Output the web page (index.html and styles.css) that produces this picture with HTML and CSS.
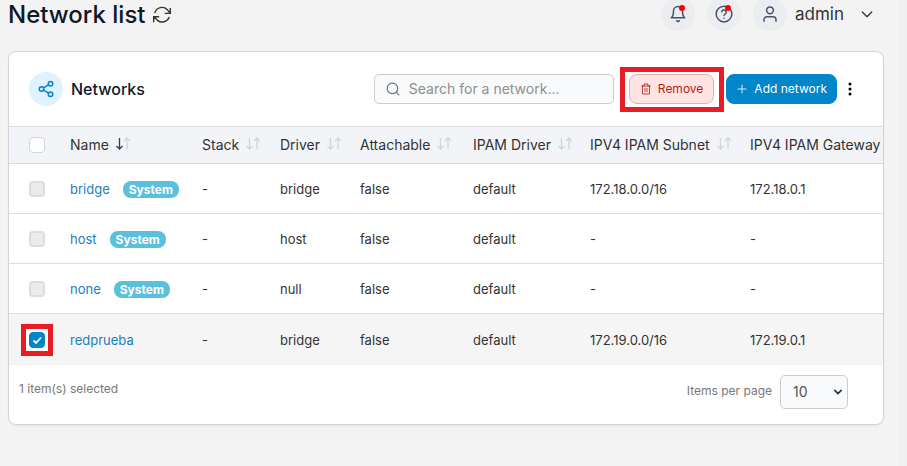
FILE: index.html
```html
<!DOCTYPE html>
<html lang="en">
<head>
<meta charset="utf-8">
<title>Network list</title>
<link rel="stylesheet" href="styles.css">
</head>
<body>
<svg class="sprite" aria-hidden="true">
  <symbol id="sort-down" viewBox="0 0 8 16"><path d="M4.500 2v11M1.500 10l3 3 3-3"/></symbol>
  <symbol id="sort-up" viewBox="0 0 8 16"><path d="M4 13V2M1 5l3-3 3 3"/></symbol>
</svg>
<header class="topbar">
  <h1>Network list</h1>
  <button class="plain refresh" aria-label="Refresh"><svg class="icon" width="20" height="20" viewBox="0 0 24 24"><path d="M22 4v6h-6M2 20v-6h6M3.500 9a9 9 0 0 1 14.900-3.400L22 10M2 14l4.600 4.400A9 9 0 0 0 20.500 15"/></svg></button>
  <nav class="user">
    <button class="round" aria-label="Notifications"><svg class="icon" width="18" height="18" viewBox="0 0 24 24"><path d="M18 8A6 6 0 0 0 6 8c0 7-3 9-3 9h18s-3-2-3-9M10.300 21a2 2 0 0 0 3.400 0"/></svg><i class="dot"></i></button>
    <button class="round" aria-label="Help"><svg class="icon" width="18" height="18" viewBox="0 0 24 24"><circle cx="12" cy="12" r="10.500"/><path d="M9 9a3 3 0 0 1 5.900 1c0 2-3 2.500-3 4M12 17.500v.1"/></svg><i class="dot"></i></button>
    <button class="round" aria-label="Account"><svg class="icon" width="18" height="18" viewBox="0 0 24 24"><circle cx="12" cy="7" r="4.500"/><path d="M4 21.500v-2a4 4 0 0 1 4-4h8a4 4 0 0 1 4 4v2"/></svg></button>
    <button class="plain account">admin <svg class="icon" width="16" height="16" viewBox="0 0 24 24"><path d="M5 9l7 7 7-7"/></svg></button>
  </nav>
</header>
<main class="card">
  <div class="toolbar">
    <span class="badge-icon"><svg class="icon" width="18" height="18" viewBox="0 0 24 24"><circle cx="18" cy="5" r="3"/><circle cx="6" cy="12" r="3"/><circle cx="18" cy="19" r="3"/><path d="M8.600 13.500l6.800 4M15.400 6.500l-6.800 4"/></svg></span>
    <h2>Networks</h2>
    <label class="search"><svg class="icon" width="14" height="14" viewBox="0 0 24 24"><circle cx="11" cy="11" r="9"/><path d="M22 22l-4.500-4.500"/></svg><input type="text" placeholder="Search for a network..." aria-label="Search for a network"></label>
    <span class="marker marker-wide"><button class="btn remove"><svg class="icon" width="12" height="12" viewBox="0 0 24 24"><path d="M3 6h18M8 6V2h8v4M5 6v16h14V6"/><path d="M10 11v6M14 11v6"/></svg>Remove</button></span>
    <button class="btn add"><svg class="icon" width="12" height="12" viewBox="0 0 24 24"><path d="M12 4v16M4 12h16"/></svg>Add network</button>
    <button class="plain more" aria-label="More options"><svg width="6" height="14" viewBox="0 0 6 14"><circle cx="3" cy="2" r="1.500"/><circle cx="3" cy="7" r="1.500"/><circle cx="3" cy="12" r="1.500"/></svg></button>
  </div>
  <div class="scroll">
  <table>
    <colgroup><col class="c-check"><col class="c-name"><col class="c-stack"><col class="c-driver"><col class="c-attach"><col class="c-ipam"><col class="c-subnet"><col></colgroup>
    <thead><tr>
      <th><input type="checkbox" aria-label="Select all"></th>
      <th>Name<span class="sort"><svg class="active"><use href="#sort-down"/></svg><svg><use href="#sort-up"/></svg></span></th>
      <th>Stack<span class="sort"><svg><use href="#sort-down"/></svg><svg><use href="#sort-up"/></svg></span></th>
      <th>Driver<span class="sort"><svg><use href="#sort-down"/></svg><svg><use href="#sort-up"/></svg></span></th>
      <th>Attachable<span class="sort"><svg><use href="#sort-down"/></svg><svg><use href="#sort-up"/></svg></span></th>
      <th>IPAM Driver<span class="sort"><svg><use href="#sort-down"/></svg><svg><use href="#sort-up"/></svg></span></th>
      <th>IPV4 IPAM Subnet<span class="sort"><svg><use href="#sort-down"/></svg><svg><use href="#sort-up"/></svg></span></th>
      <th>IPV4 IPAM Gateway</th>
    </tr></thead>
    <tbody>
      <tr><td><input type="checkbox" disabled aria-label="Select bridge"></td><td><a href="#">bridge</a><span class="tag">System</span></td><td>-</td><td>bridge</td><td>false</td><td>default</td><td>172.18.0.0/16</td><td>172.18.0.1</td></tr>
      <tr><td><input type="checkbox" disabled aria-label="Select host"></td><td><a href="#">host</a><span class="tag">System</span></td><td>-</td><td>host</td><td>false</td><td>default</td><td>-</td><td>-</td></tr>
      <tr><td><input type="checkbox" disabled aria-label="Select none"></td><td><a href="#">none</a><span class="tag">System</span></td><td>-</td><td>null</td><td>false</td><td>default</td><td>-</td><td>-</td></tr>
      <tr class="selected"><td><span class="marker marker-check"><input type="checkbox" checked aria-label="Select redprueba"></span></td><td><a href="#">redprueba</a></td><td>-</td><td>bridge</td><td>false</td><td>default</td><td>172.19.0.0/16</td><td>172.19.0.1</td></tr>
    </tbody>
  </table>
  </div>
  <footer>
    <span>1 item(s) selected</span>
    <label class="per-page" for="per-page">Items per page</label>
    <span class="select"><select id="per-page"><option>10</option><option>25</option><option>50</option></select><svg class="icon" width="8" height="8" viewBox="0 0 10 10"><path d="M1 3l4 4 4-4"/></svg></span>
  </footer>
</main>
</body>
</html>
```
FILE: styles.css
```css
* { box-sizing: border-box; }
body {
  margin: 0;
  min-height: 100vh;
  padding-right: 15px;
  border-right: 8px solid #f0f0f0;
  padding-left: 8px;
  background: #f3f3f3;
  color: #333;
  font: 13px/20px Inter, "Liberation Sans", sans-serif;
}
button, input, select { font: inherit; color: inherit; margin: 0; }
button { cursor: pointer; }
.sprite { position: absolute; width: 0; height: 0; }
.icon { fill: none; stroke: currentColor; stroke-width: 2; stroke-linecap: round; stroke-linejoin: round; flex: none; }
.plain { padding: 0; border: 0; background: none; display: flex; align-items: center; }

.topbar { display: flex; align-items: center; height: 28px; margin-bottom: 23px; }
h1 { margin: 0; padding-top: 2px; font-size: 24px; font-weight: 500; color: #101828; }
.refresh { margin-left: 7px; padding-top: 2px; color: #333; }
.refresh .icon { stroke-width: 1.700; }
.user { display: flex; align-items: center; gap: 12px; margin-left: auto; }
.round {
  position: relative;
  display: grid;
  place-items: center;
  width: 34px;
  height: 34px;
  padding: 0;
  border: 0;
  border-radius: 50%;
  background: #ebedf1;
  color: #475467;
}
.dot { position: absolute; top: 8px; right: 10px; width: 6px; height: 6px; border-radius: 50%; background: #f00; }
.account { gap: 15px; margin: 0 9px 0 -4px; font-size: 17px; }

.card { background: #fff; border: 1px solid #d0d5dd; border-radius: 8px; box-shadow: 0 1px 2px #1018280d; }
.toolbar { display: flex; align-items: center; height: 74px; padding: 0 30px 0 20px; }
.badge-icon { display: grid; place-items: center; width: 34px; height: 34px; border-radius: 50%; background: #e0f2fe; color: #0086c9; }
h2 { margin: 0 0 0 8px; font-size: 16px; font-weight: 500; color: #101828; }
.search {
  display: flex;
  align-items: center;
  width: 240px;
  height: 30px;
  margin: 0 6px 0 auto;
  padding: 0 11px;
  border: 1px solid #ccc;
  border-radius: 5px;
  background: #f9fafb;
  color: #667085;
}
.search input { flex: 1; min-width: 0; padding: 0 0 0 9px; border: 0; outline: 0; background: none; font-size: 14px; }
.search input::placeholder { color: #8f8f8f; opacity: 1; }
.marker { display: flex; border: 5px solid #e81c24; background: #fff; }
.marker-wide { padding: 2px 5px 3px 4px; margin-right: 2px; }
.marker-check { width: 32px; padding: 3px; margin-left: -8px; }
.btn { display: flex; align-items: center; gap: 6px; height: 30px; padding: 0 10px; border: 1px solid; border-radius: 8px; font-size: 12px; font-weight: 400; }
.btn .icon { stroke-width: 1.700; }
.remove { border-color: #f4aaa4; background: #fee4e2; color: #b42318; }
.add { padding: 0 9px; border-color: #0086c9; background: #0086c9; color: #fff; }
.more { margin-left: 10px; }

.scroll { overflow: hidden; border-top: 1px solid #dcdcdc; }
table { width: 100%; table-layout: fixed; border-collapse: separate; border-spacing: 0; }
.c-check { width: 61px; }
.c-name { width: 132px; }
.c-stack { width: 78px; }
.c-driver { width: 80px; }
.c-attach { width: 113px; }
.c-ipam { width: 117px; }
.c-subnet { width: 160px; }
th, td { padding: 0; text-align: left; white-space: nowrap; vertical-align: middle; border-bottom: 1px solid #ddd; }
th { height: 37px; background: #f2f4f8; font-size: 14px; font-weight: 400; }
td { height: 50px; }
.selected td { height: 51px; border: 0; background: #f5f5f5; }
th:first-child, td:first-child { padding-left: 20px; }
.sort { display: inline-flex; margin-left: 6px; vertical-align: -2px; }
.sort svg { width: 8px; height: 16px; fill: none; stroke: #d0d5dd; stroke-width: 1.300; }
.sort .active { stroke: #344054; }
a { color: #1a7fb8; text-decoration: none; }
.tag { display: inline-block; margin-left: 13px; padding: 0 6px; border-radius: 8px; background: #5bc0de; color: #fff; font-size: 12px; font-weight: 700; line-height: 17px; }
input[type="checkbox"] { display: block; appearance: none; width: 16px; height: 16px; border: 1px solid #d0d5dd; border-radius: 4px; background: #fff; }
input[type="checkbox"]:disabled { border: 2px solid #ddd; background: #ebebeb; }
input[type="checkbox"]:checked {
  border-color: #0086c9;
  background: #0086c9 url("data:image/svg+xml,%3Csvg xmlns='http://www.w3.org/2000/svg' viewBox='0 0 14 14'%3E%3Cpath d='M3.500 7.500l2.500 2.500 5-5.500' fill='none' stroke='white' stroke-width='1.800'/%3E%3C/svg%3E");
}
footer { display: flex; align-items: flex-start; padding: 10px 35px 15px 10px; font-size: 12px; line-height: 28px; color: #777; }
.per-page { margin-left: auto; line-height: 32px; }
.select { position: relative; margin-left: 8px; }
select { display: block; appearance: none; width: 68px; height: 34px; padding: 0 12px; border: 1px solid #ccc; border-radius: 5px; background: #f9fafb; color: #555; font-size: 14px; }
.select .icon { position: absolute; right: 6px; top: 13px; color: #333; pointer-events: none; }
```
